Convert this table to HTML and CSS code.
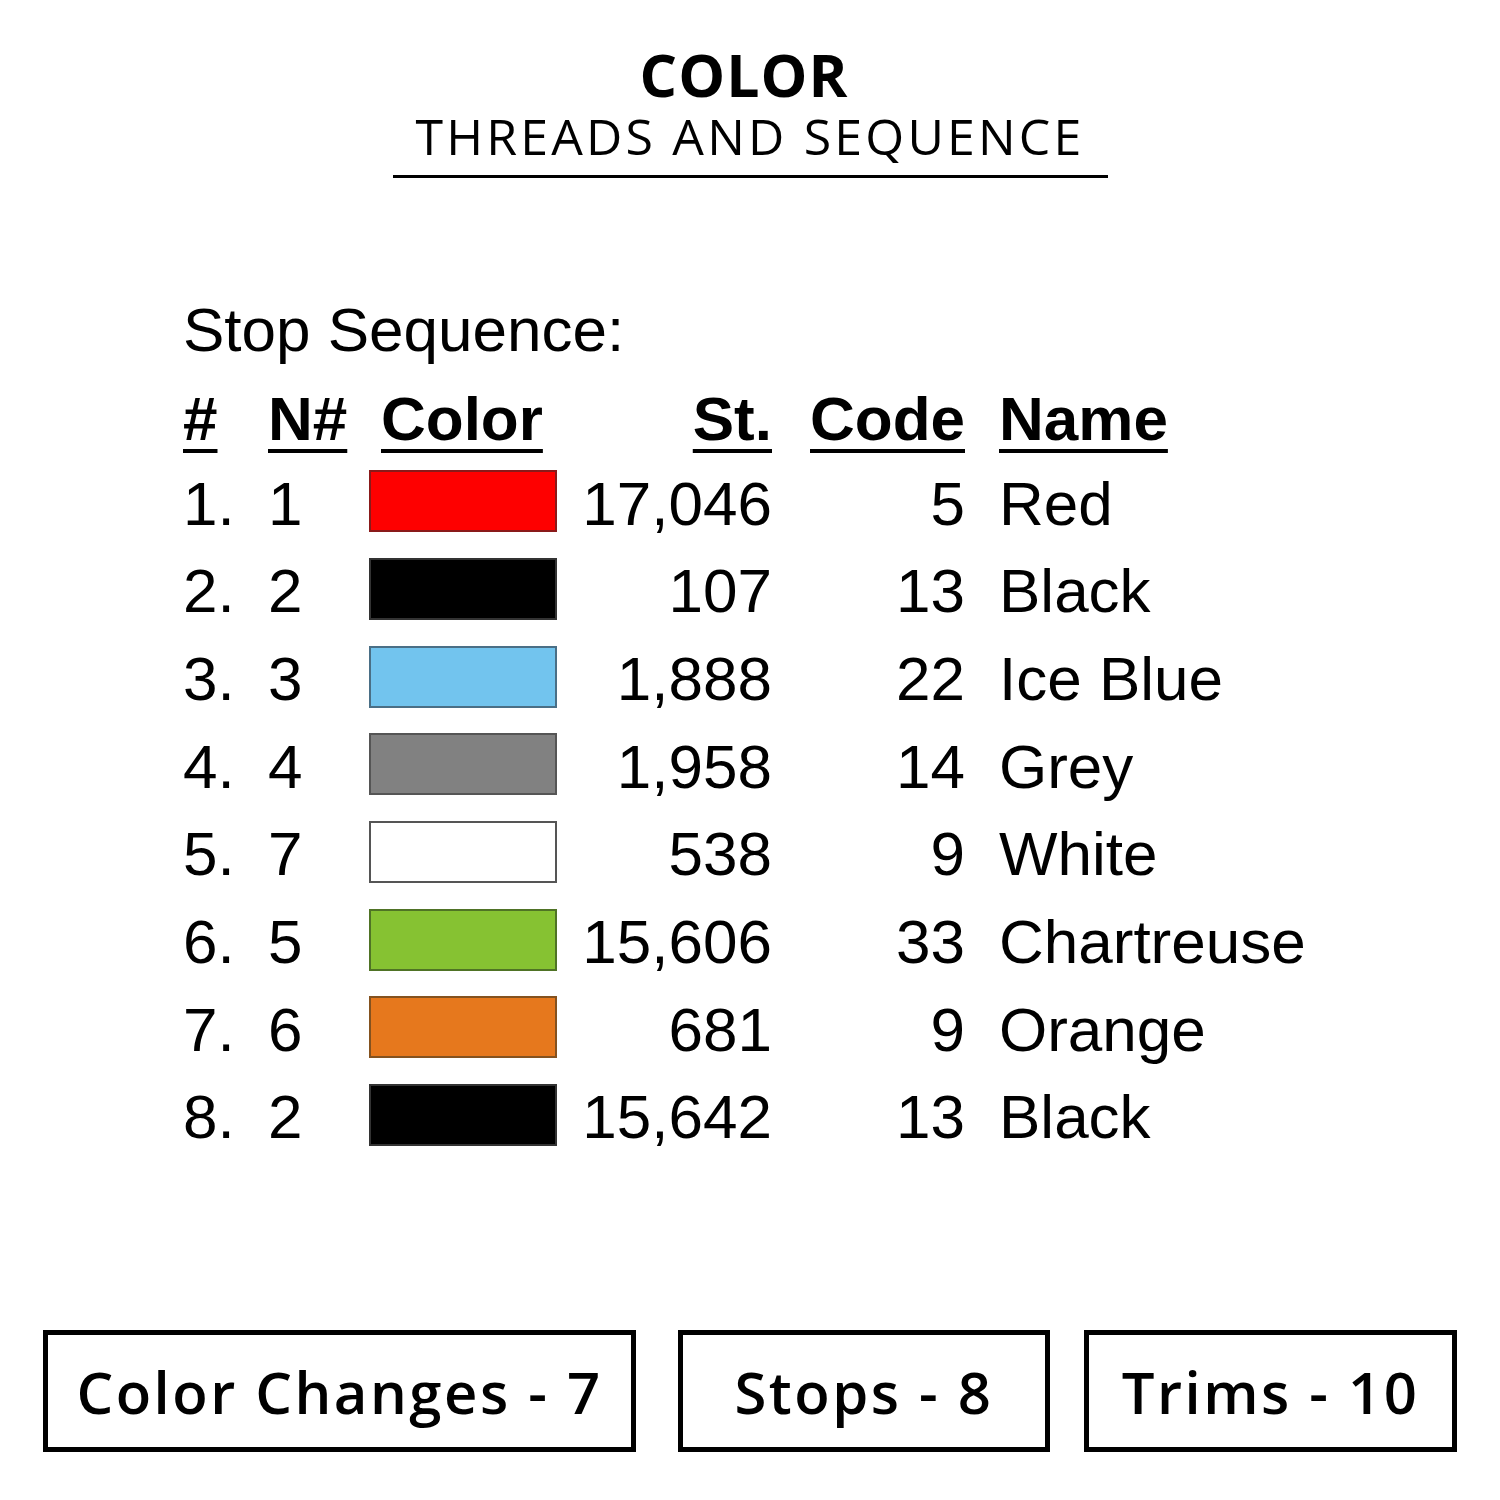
FILE: index.html
```html
<!DOCTYPE html>
<html>
<head>
<meta charset="utf-8">
<link rel="stylesheet" href="styles.css">
</head>
<body>
<div class="page">
  <header class="title">
    <div class="title-main">COLOR</div>
    <div class="title-sub">THREADS AND SEQUENCE</div>
  </header>

  <section class="seq">
    <div class="seq-caption">Stop Sequence:</div>
    <div class="grid">
      <div class="h c1"><span>#</span></div>
      <div class="h c2"><span>N#</span></div>
      <div class="h c3"><span>Color</span></div>
      <div class="h c4"><span>St.</span></div>
      <div class="h c5"><span>Code</span></div>
      <div class="h c6"><span>Name</span></div>

      <div class="c1">1.</div><div class="c2">1</div><div class="swc"><div class="sw red"></div></div><div class="c4">17,046</div><div class="c5">5</div><div class="c6">Red</div>
      <div class="c1">2.</div><div class="c2">2</div><div class="swc"><div class="sw black"></div></div><div class="c4">107</div><div class="c5">13</div><div class="c6">Black</div>
      <div class="c1">3.</div><div class="c2">3</div><div class="swc"><div class="sw ice"></div></div><div class="c4">1,888</div><div class="c5">22</div><div class="c6">Ice Blue</div>
      <div class="c1">4.</div><div class="c2">4</div><div class="swc"><div class="sw grey"></div></div><div class="c4">1,958</div><div class="c5">14</div><div class="c6">Grey</div>
      <div class="c1">5.</div><div class="c2">7</div><div class="swc"><div class="sw white"></div></div><div class="c4">538</div><div class="c5">9</div><div class="c6">White</div>
      <div class="c1">6.</div><div class="c2">5</div><div class="swc"><div class="sw chart"></div></div><div class="c4">15,606</div><div class="c5">33</div><div class="c6">Chartreuse</div>
      <div class="c1">7.</div><div class="c2">6</div><div class="swc"><div class="sw orange"></div></div><div class="c4">681</div><div class="c5">9</div><div class="c6">Orange</div>
      <div class="c1">8.</div><div class="c2">2</div><div class="swc"><div class="sw black"></div></div><div class="c4">15,642</div><div class="c5">13</div><div class="c6">Black</div>
    </div>
  </section>

  <footer class="stats">
    <div class="box b1">Color Changes - 7</div>
    <div class="box b2">Stops - 8</div>
    <div class="box b3">Trims - 10</div>
  </footer>
</div>
</body>
</html>
```

FILE: styles.css
```css
html, body {
  margin: 0;
  padding: 0;
  background: #fff;
  color: #000;
}
.page {
  width: 1500px;
  height: 1500px;
  position: relative;
  overflow: hidden;
}
.title {
  width: 715px;
  margin: 0 auto;
  padding-top: 44px;
  display: flex;
  flex-direction: column;
  align-items: center;
  border-bottom: 3px solid #000;
  padding-bottom: 9px;
}
.title-main {
  font-family: "Open Sans", sans-serif;
  font-weight: 700;
  font-size: 59px;
  line-height: 60px;
  letter-spacing: 1px;
  margin-left: -12px;
}
.title-sub {
  font-family: "Open Sans", sans-serif;
  font-weight: 400;
  font-size: 50px;
  line-height: 60px;
  letter-spacing: 3.2px;
  margin-top: 2px;
}
.seq {
  padding-left: 183px;
  margin-top: 104px;
  font-family: "Liberation Sans", Arial, sans-serif;
  font-size: 62px;
}
.seq-caption {
  line-height: 88px;
  height: 88px;
  padding-top: 4px;
}
.grid {
  margin-top: 1px;
  display: grid;
  grid-template-columns: 85px 101px 188px 215px 193px auto;
  grid-template-rows: 84.5px;
  grid-auto-rows: 87.7px;
  align-items: center;
  line-height: 87.7px;
}
.h {
  font-weight: 700;
  height: 84.5px;
  line-height: 87.7px;
}
.h span {
  text-decoration: underline;
  text-decoration-thickness: 4px;
  text-underline-offset: 9px;
}
.h.c3 { padding-left: 12px; }
.c4, .c5 { text-align: right; }
.c6 { padding-left: 34px; white-space: nowrap; }
.swc {
  display: flex;
  align-items: center;
  height: 100%;
}
.sw {
  width: 188px;
  height: 62px;
  box-sizing: border-box;
  border: 2px solid #555;
  margin-bottom: 4px;
}
.red { background: #fe0000; border-color: #8a1a1a; }
.black { background: #000; border-color: #333; }
.ice { background: #72c4ee; border-color: #4a6f86; }
.grey { background: #818181; border-color: #555; }
.white { background: #fff; border-color: #555; }
.chart { background: #86c232; border-color: #4f7325; }
.orange { background: #e6781d; border-color: #84521f; }

.stats {
  position: absolute;
  left: 43px;
  top: 1330px;
  display: flex;
}
.box {
  box-sizing: border-box;
  height: 122px;
  border: 5px solid #000;
  display: flex;
  align-items: center;
  justify-content: center;
  font-family: "Open Sans", sans-serif;
  font-weight: 600;
  font-size: 58px;
  letter-spacing: 2.5px;
}
.b1 { width: 593px; }
.b2 { width: 372px; margin-left: 42px; }
.b3 { width: 373px; margin-left: 34px; }
```
